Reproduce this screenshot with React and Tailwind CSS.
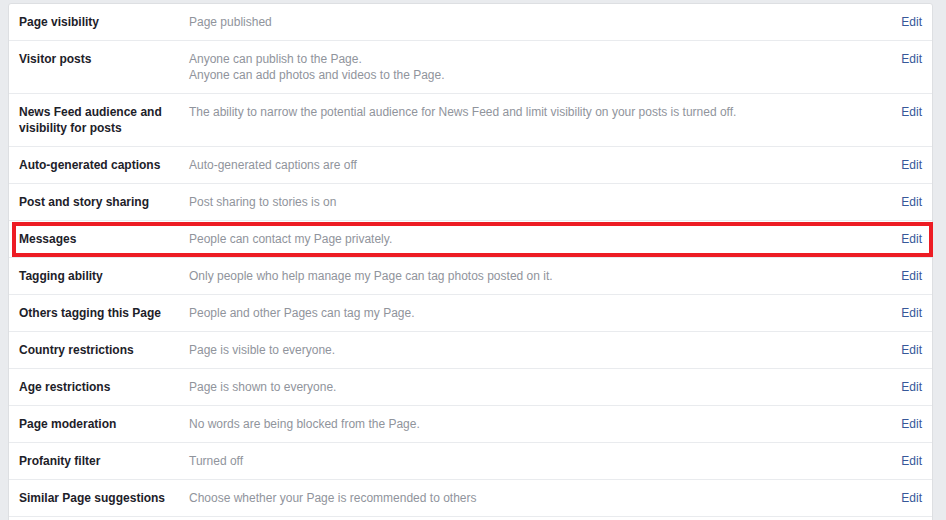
import React from 'react'

const rows = [
  { label: 'Page visibility', desc: ['Page published'] },
  {
    label: 'Visitor posts',
    desc: ['Anyone can publish to the Page.', 'Anyone can add photos and videos to the Page.']
  },
  {
    label: 'News Feed audience and visibility for posts',
    desc: [
      'The ability to narrow the potential audience for News Feed and limit visibility on your posts is turned off.'
    ]
  },
  { label: 'Auto-generated captions', desc: ['Auto-generated captions are off'] },
  { label: 'Post and story sharing', desc: ['Post sharing to stories is on'] },
  { label: 'Messages', desc: ['People can contact my Page privately.'], highlight: true },
  { label: 'Tagging ability', desc: ['Only people who help manage my Page can tag photos posted on it.'] },
  { label: 'Others tagging this Page', desc: ['People and other Pages can tag my Page.'] },
  { label: 'Country restrictions', desc: ['Page is visible to everyone.'] },
  { label: 'Age restrictions', desc: ['Page is shown to everyone.'] },
  { label: 'Page moderation', desc: ['No words are being blocked from the Page.'] },
  { label: 'Profanity filter', desc: ['Turned off'] },
  { label: 'Similar Page suggestions', desc: ['Choose whether your Page is recommended to others'] }
]

const SettingRow = ({ row }) => (
  <div className="relative flex px-[10px] py-[10px] border-b border-[#e9ebee] text-[12px] leading-[16px]">
    <div className="w-[160px] shrink-0 pr-[10px] font-bold text-[#1d2129]">{row.label}</div>
    <div className="flex-1 ml-[10px] text-[#90949c]">
      {row.desc.map((line) => (
        <div key={line}>{line}</div>
      ))}
    </div>
    <a href="#" className="ml-[10px] text-[#365899]">
      Edit
    </a>
    {row.highlight && (
      <div className="absolute left-[3px] right-[-1px] top-[1px] bottom-0 border-[4px] border-[#ed1c24] pointer-events-none" />
    )}
  </div>
)

export default function App() {
  return (
    <div
      className="h-[520px] overflow-hidden bg-[#e9ebee] pl-[8px] pr-[13px] pt-[3px]"
      style={{ fontFamily: '"Liberation Sans", Arial, sans-serif' }}
    >
      <div className="bg-white border border-[#dddfe2] rounded-t-[3px]">
        {rows.map((row) => (
          <SettingRow key={row.label} row={row} />
        ))}
        {/* next row continues below the fold */}
        <div className="h-[36px]" />
      </div>
    </div>
  )
}
